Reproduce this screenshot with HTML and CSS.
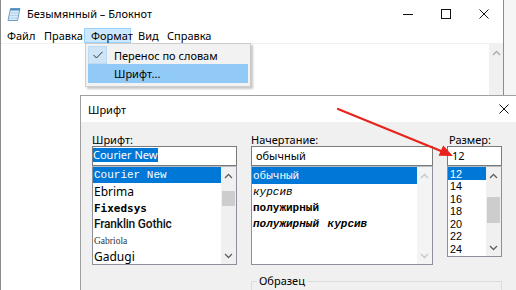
FILE: index.html
```html
<!DOCTYPE html>
<html lang="ru">
<head>
<meta charset="utf-8">
<title>Блокнот – Шрифт</title>
<link rel="stylesheet" href="styles.css">
</head>
<body>
<div class="desktop">
  <div class="notepad">
    <div class="np-title">
      <svg class="np-icon" width="14" height="15" viewBox="0 0 14 15">
        <path d="M3.5 1.5 L13 1.5 L10.5 13.5 L1 13.5 Z" fill="#d6eaf7" stroke="#6f9dc2" stroke-width="1"/>
        <path d="M3.5 1.5 L13 1.5 L12.5 3.5 L3 3.5 Z" fill="#4f8fc4"/>
        <path d="M3.5 6 L11.5 6 M3 8.5 L11 8.5 M2.5 11 L10.5 11" stroke="#a9cbe4" stroke-width="0.8"/>
      </svg>
      <span class="np-title-text">Безымянный – Блокнот</span>
      <div class="win-ctrls">
        <div class="win-btn"><svg width="10" height="10" viewBox="0 0 10 10"><path d="M0 5.5 H10" stroke="#111" stroke-width="1"/></svg></div>
        <div class="win-btn"><svg width="10" height="10" viewBox="0 0 10 10"><rect x="0.5" y="0.5" width="9" height="9" fill="none" stroke="#111" stroke-width="1"/></svg></div>
        <div class="win-btn"><svg width="10" height="10" viewBox="0 0 10 10"><path d="M0.5 0.5 L9.5 9.5 M9.5 0.5 L0.5 9.5" stroke="#111" stroke-width="1"/></svg></div>
      </div>
    </div>
    <div class="np-menu">
      <span class="menu-item m1">Файл</span>
      <span class="menu-item m2">Правка</span>
      <span class="menu-item m3 active">Формат</span>
      <span class="menu-item m4">Вид</span>
      <span class="menu-item m5">Справка</span>
    </div>
    <div class="np-edit">
      <div class="np-area"></div>
      <div class="np-vscroll">
        <svg width="9" height="6" viewBox="0 0 9 6"><path d="M1 5 L4.5 1.5 L8 5" fill="none" stroke="#a8a8a8" stroke-width="1.3"/></svg>
      </div>
    </div>
  </div>

  <div class="dropdown">
    <div class="dd-item">
      <div class="dd-check checked"><svg width="10" height="8" viewBox="0 0 10 8"><path d="M0.5 4 L3.5 7 L9.5 0.8" fill="none" stroke="#333" stroke-width="1"/></svg></div>
      <div class="dd-text">Перенос по словам</div>
    </div>
    <div class="dd-item hover">
      <div class="dd-check"></div>
      <div class="dd-text">Шрифт...</div>
    </div>
  </div>

  <div class="dialog">
    <div class="dlg-title">
      <span class="dlg-title-text">Шрифт</span>
      <div class="dlg-close"><svg width="10" height="10" viewBox="0 0 10 10"><path d="M0.5 0.5 L9.5 9.5 M9.5 0.5 L0.5 9.5" stroke="#111" stroke-width="1"/></svg></div>
    </div>
    <div class="dlg-body">
      <div class="col">
        <div class="lbl">Шрифт:</div>
        <div class="inp"><span class="sel">Courier New</span></div>
        <div class="list list-font">
          <div class="items">
            <div class="it f-courier selected">Courier New</div>
            <div class="it f-ebrima">Ebrima</div>
            <div class="it f-fixed">Fixedsys</div>
            <div class="it f-franklin">Franklin Gothic</div>
            <div class="it f-gabriola">Gabriola</div>
            <div class="it f-gadugi">Gadugi</div>
          </div>
          <div class="sb">
            <div class="sb-btn"><svg width="9" height="6" viewBox="0 0 9 6"><path d="M1 5 L4.5 1.5 L8 5" fill="none" stroke="#606060" stroke-width="1.3"/></svg></div>
            <div class="sb-track"><div class="thumb thumb-font"></div></div>
            <div class="sb-btn"><svg width="9" height="6" viewBox="0 0 9 6"><path d="M1 1 L4.5 4.5 L8 1" fill="none" stroke="#606060" stroke-width="1.3"/></svg></div>
          </div>
        </div>
      </div>
      <div class="col">
        <div class="lbl">Начертание:</div>
        <div class="inp pad">обычный</div>
        <div class="list list-style">
          <div class="items">
            <div class="it s-reg selected">обычный</div>
            <div class="it s-it">курсив</div>
            <div class="it s-b">полужирный</div>
            <div class="it s-bi">полужирный курсив</div>
          </div>
          <div class="sb disabled">
            <div class="sb-btn"><svg width="9" height="6" viewBox="0 0 9 6"><path d="M1 5 L4.5 1.5 L8 5" fill="none" stroke="#c6c6c6" stroke-width="1.3"/></svg></div>
            <div class="sb-track"></div>
            <div class="sb-btn"><svg width="9" height="6" viewBox="0 0 9 6"><path d="M1 1 L4.5 4.5 L8 1" fill="none" stroke="#c6c6c6" stroke-width="1.3"/></svg></div>
          </div>
        </div>
      </div>
      <div class="col">
        <div class="lbl lbl-size">Размер:</div>
        <div class="inp pad">12</div>
        <div class="list list-size">
          <div class="items">
            <div class="it z selected">12</div>
            <div class="it z">14</div>
            <div class="it z">16</div>
            <div class="it z">18</div>
            <div class="it z">20</div>
            <div class="it z">22</div>
            <div class="it z">24</div>
          </div>
          <div class="sb">
            <div class="sb-btn"><svg width="9" height="6" viewBox="0 0 9 6"><path d="M1 5 L4.5 1.5 L8 5" fill="none" stroke="#606060" stroke-width="1.3"/></svg></div>
            <div class="sb-track"><div class="thumb thumb-size"></div></div>
            <div class="sb-btn"><svg width="9" height="6" viewBox="0 0 9 6"><path d="M1 1 L4.5 4.5 L8 1" fill="none" stroke="#606060" stroke-width="1.3"/></svg></div>
          </div>
        </div>
      </div>
      <fieldset class="sample">
        <legend>Образец</legend>
      </fieldset>
    </div>
  </div>

  <svg class="arrow" width="516" height="290" viewBox="0 0 516 290">
    <path d="M338 109 L441 151" stroke="#e8231b" stroke-width="2.2" stroke-linecap="round"/>
    <path d="M453 156 L438.6 155.8 L443.2 145.6 Z" fill="#e8231b"/>
  </svg>
</div>
</body>
</html>
```

FILE: styles.css
```css
* { box-sizing: border-box; }
html, body { margin: 0; padding: 0; }
body {
  width: 516px;
  height: 290px;
  overflow: hidden;
  background: #f5f5f5;
  font-family: "Noto Sans", "Open Sans", sans-serif;
  font-size: 11px;
  color: #000;
}
.desktop {
  position: relative;
  width: 516px;
  height: 290px;
  overflow: hidden;
}

/* Notepad window */
.notepad {
  position: absolute;
  left: 0;
  top: 0;
  width: 504px;
  height: 300px;
  background: #fff;
  border-left: 1px solid #8c8c8c;
  border-right: 1px solid #8c8c8c;
  display: flex;
  flex-direction: column;
}
.np-title {
  height: 28px;
  display: flex;
  align-items: center;
}
.np-icon { margin-left: 6px; flex: none; }
.np-title-text { margin-left: 6px; line-height: 16px; }
.win-ctrls { margin-left: auto; display: flex; }
.win-btn {
  width: 38px;
  height: 28px;
  display: flex;
  align-items: center;
  justify-content: center;
}
.np-menu {
  height: 15px;
  display: flex;
}
.menu-item {
  line-height: 15px;
  padding-left: 6px;
  white-space: nowrap;
}
.m1 { width: 37px; }
.m2 { width: 46px; }
.m3 { width: 47px; padding-left: 7px; }
.m4 { width: 30px; padding-left: 7px; }
.m5 { width: 50px; }
.menu-item.active {
  background: #cce8ff;
  box-shadow: inset 0 0 0 1px #99d1ff;
}
.np-edit {
  flex: 1;
  display: flex;
  border-top: 1px solid #f0f0f0;
}
.np-area { flex: 1; }
.np-vscroll {
  width: 14px;
  background: #f0f0f0;
  display: flex;
  justify-content: center;
  align-items: flex-start;
  padding-top: 6px;
}

/* Format menu dropdown */
.dropdown {
  position: absolute;
  left: 85px;
  top: 43px;
  width: 166px;
  height: 44px;
  background: #f2f2f2;
  border: 1px solid #cccccc;
  padding: 2px;
  box-shadow: 2px 2px 2px rgba(0, 0, 0, 0.22);
  display: flex;
  flex-direction: column;
}
.dd-item {
  display: flex;
  height: 18px;
  align-items: stretch;
}
.dd-item.hover {
  height: 19px;
  background: #91c9f7;
}
.dd-check {
  width: 19px;
  display: flex;
  align-items: center;
  justify-content: center;
}
.dd-check.checked {
  background: #cde5f7;
  box-shadow: inset 0 0 0 1px #bcdaf2;
}
.dd-text {
  padding-left: 7px;
  display: flex;
  align-items: center;
}

/* Font dialog */
.dialog {
  position: absolute;
  left: 80px;
  top: 95px;
  width: 448px;
  height: 215px;
  background: #f0f0f0;
  border: 1px solid #a0a0a0;
  display: flex;
  flex-direction: column;
}
.dlg-title {
  height: 26px;
  background: #fff;
  display: flex;
  align-items: center;
  padding-left: 7px;
  flex: none;
}
.dlg-close {
  margin-left: auto;
  width: 46px;
  height: 26px;
  display: flex;
  align-items: center;
  justify-content: center;
}
.dlg-body {
  display: grid;
  grid-template-columns: 145px 182px 55px;
  column-gap: 14px;
  padding: 11px 0 0 11px;
  align-items: start;
}
.col {
  display: flex;
  flex-direction: column;
}
.lbl {
  height: 13px;
  line-height: 13px;
  white-space: nowrap;
}
.lbl-size { padding-left: 2px; }
.inp {
  height: 20px;
  background: #fff;
  border: 1px solid #7a7a7a;
  line-height: 18px;
  padding-left: 0;
  white-space: nowrap;
}
.inp.pad { padding-left: 4px; }
.sel {
  display: inline-block;
  background: #0078d7;
  color: #fff;
  line-height: 14px;
  height: 14px;
  padding: 0 1px 0 0;
  vertical-align: 1px;
}
.list {
  background: #fff;
  border: 1px solid #8d9098;
  border-top-color: #b8bbc2;
  display: flex;
}
.list-font, .list-style { height: 99px; }
.list-size { height: 91px; }
.items {
  flex: 1;
  overflow: hidden;
  display: flex;
  flex-direction: column;
}
.it {
  white-space: nowrap;
  padding-left: 1px;
  display: flex;
  align-items: center;
  flex: none;
}
.it.selected {
  background: #0078d7;
  color: #fff;
}
.f-courier { height: 16px; font-family: "Liberation Mono", monospace; font-size: 11px; }
.f-ebrima { height: 17px; font-family: "Noto Sans", sans-serif; font-size: 12px; }
.f-fixed { height: 16px; font-family: "DejaVu Sans Mono", monospace; font-weight: bold; font-size: 11px; }
.f-franklin { height: 16px; font-family: "Roboto", sans-serif; font-weight: 500; font-size: 12px; letter-spacing: -0.2px; color: #111; }
.f-gabriola { height: 17px; font-family: "Liberation Serif", serif; font-size: 9.5px; color: #333; }
.f-gadugi { height: 15px; font-family: "Noto Sans", sans-serif; font-size: 12px; line-height: 15px; }
.s-reg, .s-it, .s-b, .s-bi {
  font-family: "Liberation Mono", monospace;
  font-size: 11px;
  height: 16px;
}
.s-reg { height: 17px; }
.s-it { font-style: italic; }
.s-b { font-weight: bold; }
.s-bi { font-weight: bold; font-style: italic; word-spacing: 2px; }
.z {
  height: 12.5px;
  line-height: 12px;
  font-family: "Liberation Sans", sans-serif;
  font-size: 10.8px;
  padding-left: 2px;
}
.z.selected { height: 13px; }

/* Scrollbars */
.sb {
  width: 15px;
  flex: none;
  background: #f0f0f0;
  display: flex;
  flex-direction: column;
}
.sb.disabled { background: #f4f4f4; }
.sb-btn {
  height: 17px;
  display: flex;
  align-items: center;
  justify-content: center;
  flex: none;
}
.sb-track {
  flex: 1;
  display: flex;
  flex-direction: column;
  align-items: center;
}
.thumb {
  width: 13px;
  background: #cdcdcd;
}
.thumb-font { margin-top: 7px; height: 15px; }
.thumb-size { margin-top: 13px; height: 26px; }

/* Sample group box */
.sample {
  grid-column: 2 / 4;
  margin: 8px 0 0 0;
  padding: 0;
  height: 60px;
  border: 1px solid #dcdcdc;
  min-width: 0;
}
.sample legend {
  margin-left: 5px;
  padding: 0 2px;
  line-height: 16px;
}

/* Red annotation arrow */
.arrow {
  position: absolute;
  left: 0;
  top: 0;
  pointer-events: none;
}
```
